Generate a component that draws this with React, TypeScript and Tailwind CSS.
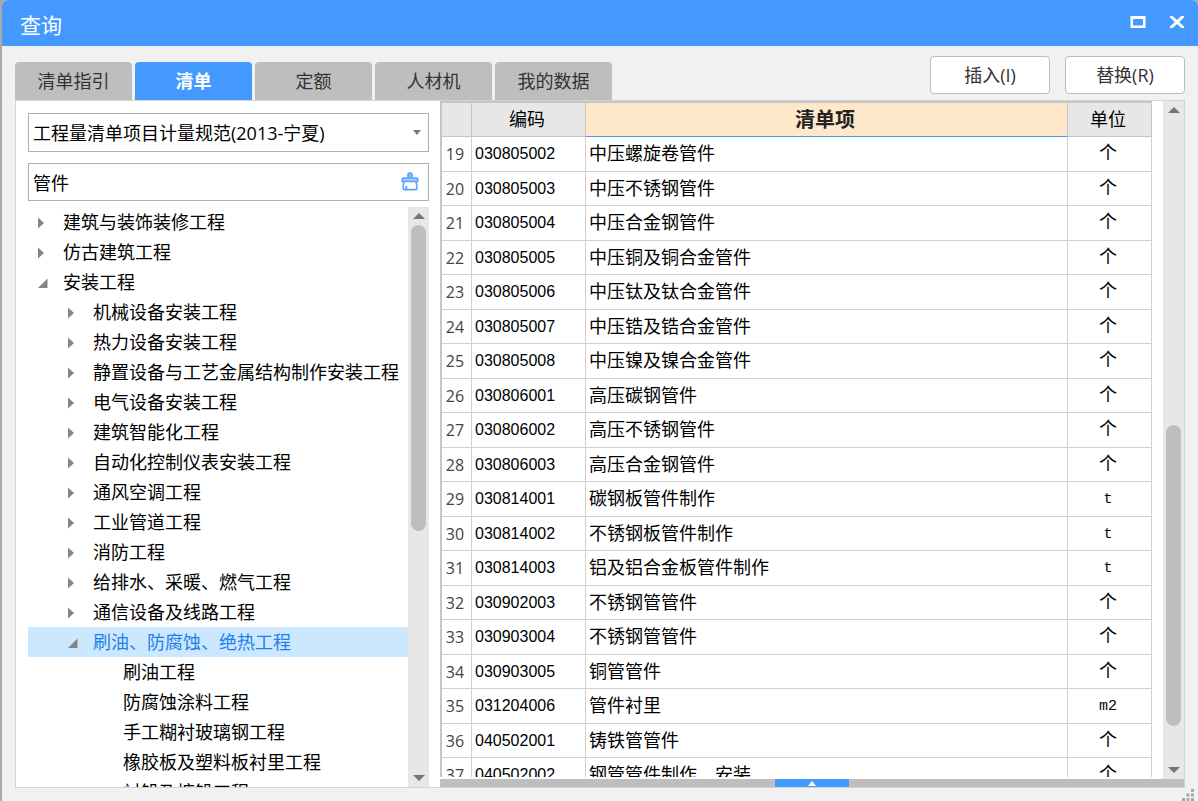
import React from "react";

const tabs = ["清单指引", "清单", "定额", "人材机", "我的数据"];

type Node = { label: string; level: 0 | 1 | 2; state: "closed" | "open" | "leaf"; selected?: boolean };

const nodes: Node[] = [
  { label: "建筑与装饰装修工程", level: 0, state: "closed" },
  { label: "仿古建筑工程", level: 0, state: "closed" },
  { label: "安装工程", level: 0, state: "open" },
  { label: "机械设备安装工程", level: 1, state: "closed" },
  { label: "热力设备安装工程", level: 1, state: "closed" },
  { label: "静置设备与工艺金属结构制作安装工程", level: 1, state: "closed" },
  { label: "电气设备安装工程", level: 1, state: "closed" },
  { label: "建筑智能化工程", level: 1, state: "closed" },
  { label: "自动化控制仪表安装工程", level: 1, state: "closed" },
  { label: "通风空调工程", level: 1, state: "closed" },
  { label: "工业管道工程", level: 1, state: "closed" },
  { label: "消防工程", level: 1, state: "closed" },
  { label: "给排水、采暖、燃气工程", level: 1, state: "closed" },
  { label: "通信设备及线路工程", level: 1, state: "closed" },
  { label: "刷油、防腐蚀、绝热工程", level: 1, state: "open", selected: true },
  { label: "刷油工程", level: 2, state: "leaf" },
  { label: "防腐蚀涂料工程", level: 2, state: "leaf" },
  { label: "手工糊衬玻璃钢工程", level: 2, state: "leaf" },
  { label: "橡胶板及塑料板衬里工程", level: 2, state: "leaf" },
  { label: "衬铅及搪铅工程", level: 2, state: "leaf" },
];

const rows: [number, string, string, string][] = [
  [19, "030805002", "中压螺旋卷管件", "个"],
  [20, "030805003", "中压不锈钢管件", "个"],
  [21, "030805004", "中压合金钢管件", "个"],
  [22, "030805005", "中压铜及铜合金管件", "个"],
  [23, "030805006", "中压钛及钛合金管件", "个"],
  [24, "030805007", "中压锆及锆合金管件", "个"],
  [25, "030805008", "中压镍及镍合金管件", "个"],
  [26, "030806001", "高压碳钢管件", "个"],
  [27, "030806002", "高压不锈钢管件", "个"],
  [28, "030806003", "高压合金钢管件", "个"],
  [29, "030814001", "碳钢板管件制作", "t"],
  [30, "030814002", "不锈钢板管件制作", "t"],
  [31, "030814003", "铝及铝合金板管件制作", "t"],
  [32, "030902003", "不锈钢管管件", "个"],
  [33, "030903004", "不锈钢管管件", "个"],
  [34, "030903005", "铜管管件", "个"],
  [35, "031204006", "管件衬里", "m2"],
  [36, "040502001", "铸铁管管件", "个"],
  [37, "040502002", "钢管管件制作、安装", "个"],
];

const indent = { 0: "pl-[9px]", 1: "pl-[39px]", 2: "pl-[69px]" };

function Twisty({ state }: { state: Node["state"] }) {
  return (
    <svg width="11" height="12" viewBox="0 0 11 12" fill="#858585" className="shrink-0" aria-hidden="true">
      {state === "closed" && <path d="M1 0.5 L7 6 L1 11.5Z" />}
      {state === "open" && <path d="M10.5 1.5 V11 H1Z" />}
    </svg>
  );
}

function ScrollArrow({ dir, label }: { dir: "up" | "down"; label: string }) {
  return (
    <button type="button" aria-label={label} className="flex h-[18px] w-full shrink-0 items-center justify-center">
      <svg width="12" height="6" viewBox="0 0 12 6" fill="#74747c" aria-hidden="true">
        {dir === "up" ? <path d="M0 6 L6 0 L12 6Z" /> : <path d="M0 0 H12 L6 6Z" />}
      </svg>
    </button>
  );
}

function TitleBar() {
  return (
    <header className="flex h-[46px] shrink-0 items-center justify-between rounded-t-md bg-[#4499ff] pl-[18px] pr-[13px] text-white">
      <h1 className="pt-1 text-[21px] leading-7">查询</h1>
      <div className="flex items-center gap-[23px] pb-0.5">
        <button type="button" aria-label="最大化" className="flex h-6 w-4 items-center justify-center">
          <svg width="16" height="12" viewBox="0 0 16 12" aria-hidden="true">
            <path fill="#fff" fillRule="evenodd" d="M0.500 0H15.500V12H0.500Z M3 3V9.500H13V3Z" />
          </svg>
        </button>
        <button type="button" aria-label="关闭" className="flex h-6 w-4 items-center justify-center">
          <svg width="16" height="12" viewBox="0 0 16 12" stroke="#fff" strokeWidth="3" aria-hidden="true">
            <path d="M1.5 0 L14.5 12 M14.5 0 L1.5 12" />
          </svg>
        </button>
      </div>
    </header>
  );
}

function Toolbar() {
  return (
    <div className="flex h-[54px] shrink-0 justify-between px-[13px]">
      <nav className="flex items-end gap-[3px]" role="tablist">
        {tabs.map((t, i) => (
          <button
            key={t}
            type="button"
            role="tab"
            aria-selected={i === 1}
            className={
              i === 1
                ? "h-[38px] w-[117px] rounded-t-sm bg-[#4499ff] font-bold text-white"
                : "h-[38px] w-[117px] rounded-t-sm bg-[#bebebe] text-[#333]"
            }
          >
            {t}
          </button>
        ))}
      </nav>
      <div className="flex items-start gap-[15px] pt-[10px]">
        {["插入(I)", "替换(R)"].map((t) => (
          <button
            key={t}
            type="button"
            className="h-[38px] w-[120px] rounded border border-[#bdbdbd] bg-white text-[#333]"
          >
            {t}
          </button>
        ))}
      </div>
    </div>
  );
}

function Sidebar() {
  return (
    <aside className="flex w-[413px] shrink-0 flex-col pl-3 pt-3">
      <div className="relative h-10">
        <select
          aria-label="计量规范"
          className="h-full w-full appearance-none border border-[#b0b0b0] bg-white pl-1 pt-0.5 outline-none"
        >
          <option>工程量清单项目计量规范(2013-宁夏)</option>
        </select>
        <svg width="8" height="5" viewBox="0 0 8 5" fill="#777" className="pointer-events-none absolute right-2 top-[17px]" aria-hidden="true">
          <path d="M0 0 H8 L4 5Z" />
        </svg>
      </div>
      <div className="mt-[11px] flex h-[39px] items-center border border-[#b0b0b0] pr-[9px]">
        <input aria-label="搜索" defaultValue="管件" className="h-full min-w-0 grow pl-1 outline-none" />
        <button type="button" aria-label="清除">
          <svg width="18" height="19" viewBox="0 0 18 19" fill="none" stroke="#55a3ff" strokeWidth="1.600" strokeLinejoin="round" aria-hidden="true">
            <path d="M7 6 V2.5 Q7 1 9 1 Q11 1 11 2.500 V6Z" fill="#8cc0ff" />
            <path d="M1.2 9.5 V7.2 Q1.2 6 2.400 6 H15.6 Q16.8 6 16.8 7.2 V9.500Z" fill="#a5cfff" />
            <path d="M2.800 9.8 L2 16 Q2 17.600 3.500 17.600 H14.500 Q16 17.600 16 16 L15.200 9.800" />
            <path d="M5.500 14 L5 17" strokeWidth="2" />
          </svg>
        </button>
      </div>
      <div className="mt-1.5 flex min-h-0 grow">
        <ul role="tree" className="min-w-0 grow overflow-hidden">
          {nodes.map((n) => (
            <li
              key={n.label}
              role="treeitem"
              aria-selected={!!n.selected}
              className={n.selected ? "bg-[#cce8ff] text-[#1f7fe8]" : "text-black"}
            >
              <button type="button" className={`flex h-[30px] w-full items-center gap-[15px] whitespace-nowrap pt-0.5 ${indent[n.level]}`}>
                <Twisty state={n.state} />
                {n.label}
              </button>
            </li>
          ))}
        </ul>
        <div className="flex w-[21px] shrink-0 flex-col bg-[#e7e7e7]">
          <ScrollArrow dir="up" label="向上滚动" />
          <div className="mx-[3px] flex-[306] rounded-full bg-[#bebebe]" />
          <div className="flex-[237]" />
          <ScrollArrow dir="down" label="向下滚动" />
        </div>
      </div>
    </aside>
  );
}

function ItemTable() {
  return (
    <div className="mr-[11px] min-h-0 min-w-0 grow overflow-hidden border-b-2 border-white">
      <table className="w-full table-fixed border-separate border-spacing-0 border-l-2 border-[#c6c6c6]">
        <colgroup>
          <col className="w-[30px]" />
          <col className="w-[114px]" />
          <col />
          <col className="w-[84px]" />
        </colgroup>
        <thead>
          <tr className="h-[36px] [&>th]:border-b [&>th]:border-r [&>th]:border-t-2 [&>th]:border-[#c6c6c6] [&>th]:p-0">
            <th aria-label="序号" className="bg-[#e7e7e7]" />
            <th className="bg-[#e7e7e7] pr-[3px]! font-normal">编码</th>
            <th className="border-b-[#4499ff]! bg-[#ffe7c9] pr-[3px]! text-[20px] font-bold text-[#222]">清单项</th>
            <th className="bg-[#e7e7e7] pr-[3px]! font-normal">单位</th>
          </tr>
        </thead>
        <tbody className="leading-6">
          {rows.map(([no, code, name, unit]) => (
            <tr
              key={no}
              className="h-[35px] even:h-[34px] [&>td]:border-b [&>td]:border-r [&>td]:border-[#d0d0d0] [&>td]:p-0"
            >
              <td className="pr-[3px]! text-center text-base text-[#444]">{no}</td>
              <td className="pl-[3px]! font-['Liberation_Sans',sans-serif] text-base">{code}</td>
              <td className="whitespace-nowrap pb-[2px]! pl-[3px]!">{name}</td>
              <td className="pr-[3px]! text-center font-['Liberation_Mono','Noto_Sans_CJK_SC',monospace]">
                <span className={unit === "个" ? "text-[18px]" : "text-[15px]"}>{unit}</span>
              </td>
            </tr>
          ))}
        </tbody>
      </table>
    </div>
  );
}

export default function App() {
  return (
    <div className="h-screen overflow-hidden bg-[#a9a9a9] pl-[2px] font-['Open_Sans','Noto_Sans_CJK_SC',sans-serif] text-[18px] text-black">
      <div className="flex h-full flex-col rounded-t-md bg-[#f1f1f1]">
        <TitleBar />
        <Toolbar />
        <main className="mx-[13px] flex min-h-0 grow border border-[#d3d3d3] bg-white">
          <Sidebar />
          <section className="ml-[11px] flex min-w-0 grow flex-col">
            <div className="flex min-h-0 grow">
              <ItemTable />
              <div className="flex w-[21px] shrink-0 flex-col bg-[#e7e7e7]">
                <ScrollArrow dir="up" label="表格向上滚动" />
                <div className="flex-[306]" />
                <div className="mx-[3px] flex-[300] rounded-full bg-[#bebebe]" />
                <div className="flex-[35]" />
                <ScrollArrow dir="down" label="表格向下滚动" />
              </div>
            </div>
            <div className="flex h-2 shrink-0 justify-center bg-[#bebebe]">
              <button type="button" aria-label="展开" className="flex w-[74px] items-center justify-center bg-[#4499ff]">
                <svg width="8" height="5" viewBox="0 0 8 5" fill="#fff" aria-hidden="true">
                  <path d="M0 5 L4 0 L8 5Z" />
                </svg>
              </button>
            </div>
          </section>
        </main>
        <footer className="flex h-[13px] shrink-0 items-end justify-end pr-1">
          <svg width="12" height="12" viewBox="0 0 12 12" fill="#a8a8a8" aria-hidden="true">
            <path d="M9 0h3v3H9zM9 4.500h3v3H9zM9 9h3v3H9zM4.500 4.500h3v3h-3zM4.500 9h3v3h-3zM0 9h3v3H0z" />
          </svg>
        </footer>
      </div>
    </div>
  );
}
